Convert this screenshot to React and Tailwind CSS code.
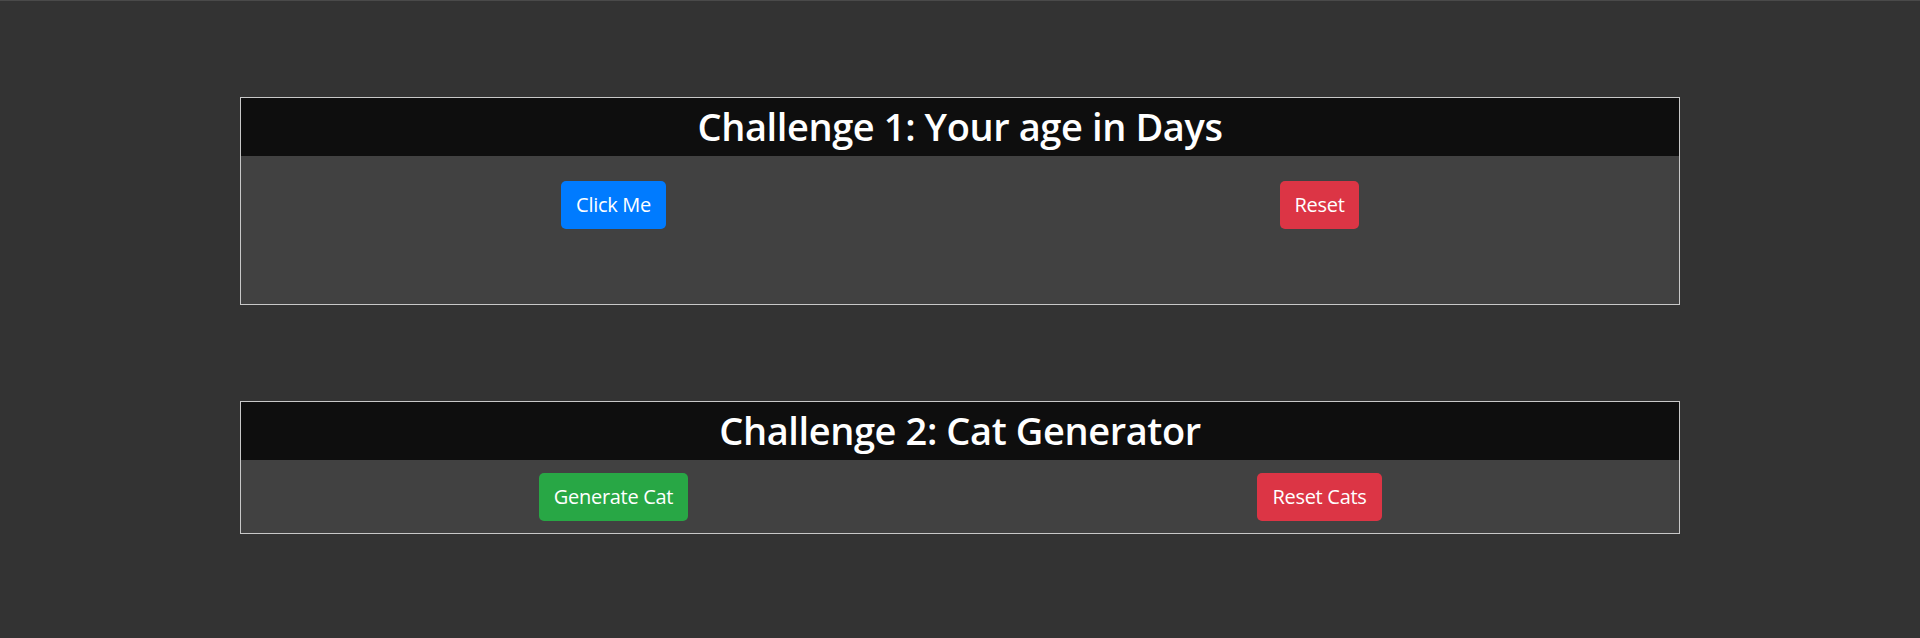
import React from "react";

function Btn({ children, color }) {
  return (
    <button
      className={`${color} text-white text-[20px] leading-[30px] px-[15px] py-[9px] rounded-[5px] tracking-[-0.3px]`}
    >
      {children}
    </button>
  );
}

export default function App() {
  return (
    <div
      className="min-h-[638px] bg-[#333333] border-t border-[#4a4a4a] flex flex-col items-center pt-[96px] gap-[96px]"
      style={{ fontFamily: '"Open Sans", "Noto Sans", sans-serif' }}
    >
      <div className="w-[1440px] border border-[#c8c8c8]">
        <div className="bg-[#0e0e0e] h-[58px] flex items-center justify-center pb-[3px]">
          <h2 className="text-white text-[38px] font-semibold leading-[48px] tracking-[-0.4px]">
            Challenge 1: Your age in Days
          </h2>
        </div>
        <div className="bg-[#414141] h-[148px] grid grid-cols-2 items-start pt-[25px]">
          <div className="flex justify-center pl-[26px]">
            <Btn color="bg-[#007bff]">Click Me</Btn>
          </div>
          <div className="flex justify-center">
            <Btn color="bg-[#dc3545]">Reset</Btn>
          </div>
        </div>
      </div>

      <div className="w-[1440px] border border-[#c8c8c8]">
        <div className="bg-[#0e0e0e] h-[58px] flex items-center justify-center pb-[3px]">
          <h2 className="text-white text-[38px] font-semibold leading-[48px] tracking-[-0.4px]">
            Challenge 2: Cat Generator
          </h2>
        </div>
        <div className="bg-[#414141] h-[73px] grid grid-cols-2 items-center">
          <div className="flex justify-center pl-[26px]">
            <Btn color="bg-[#28a745]">Generate Cat</Btn>
          </div>
          <div className="flex justify-center">
            <Btn color="bg-[#dc3545]">Reset Cats</Btn>
          </div>
        </div>
      </div>
    </div>
  );
}
